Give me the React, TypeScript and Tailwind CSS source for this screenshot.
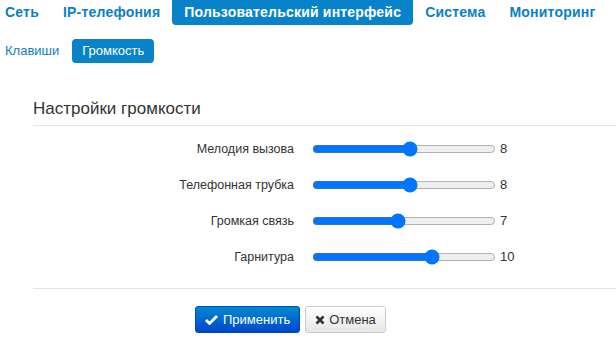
import React, { useState } from 'react';

const topTabs = ['Сеть', 'IP-телефония', 'Пользовательский интерфейс', 'Система', 'Мониторинг'];
const subTabs = ['Клавиши', 'Громкость'];

const volumes = [
  { label: 'Мелодия вызова', value: 8 },
  { label: 'Телефонная трубка', value: 8 },
  { label: 'Громкая связь', value: 7 },
  { label: 'Гарнитура', value: 10 },
];

export default function App() {
  const [levels, setLevels] = useState(volumes.map((v) => v.value));

  return (
    <div className="w-[616px] h-[358px] bg-white overflow-hidden font-['Liberation_Sans',Arial,sans-serif]">
      {/* Top navigation */}
      <div className="flex h-[25px] ml-[-7px]">
        {topTabs.map((t, i) => (
          <div
            key={t}
            className={
              i === 2
                ? 'px-3 h-[25px] flex items-center rounded-b-[4px] bg-[#0883c9] text-white font-bold text-[14px] tracking-[0.2px]'
                : 'px-3 h-[25px] flex items-center text-[#0a7fc6] font-bold text-[14px] tracking-[0.2px]'
            }
          >
            {t}
          </div>
        ))}
      </div>

      {/* Sub navigation */}
      <div className="flex items-center mt-[14px] h-[24px] ml-[5px] gap-[13px]">
        {subTabs.map((t, i) => (
          <div
            key={t}
            className={
              i === 1
                ? 'h-[24px] px-[10px] flex items-center rounded-[4px] bg-[#0883c9] text-white text-[13px]'
                : 'h-[24px] flex items-center text-[#0a7fc6] text-[13px]'
            }
          >
            {t}
          </div>
        ))}
      </div>

      {/* Panel */}
      <div className="ml-[33px] mt-[34px]">
        <h2 className="text-[17px] leading-[24px] text-[#333] pb-[4px] border-b border-[#e5e5e5]">
          Настройки громкости
        </h2>

        <div className="flex flex-col pt-[11px] gap-[12px]">
          {volumes.map((v, i) => (
            <div key={v.label} className="flex items-center h-[24px]">
              <label className="w-[261px] text-right text-[12.5px] text-[#333]">{v.label}</label>
              <input
                type="range"
                min={0}
                max={15}
                value={levels[i]}
                onChange={(e) => {
                  const next = [...levels];
                  next[i] = Number(e.target.value);
                  setLevels(next);
                }}
                className="ml-[18px] w-[184px] m-0"
              />
              <span className="ml-[4px] text-[13px] text-[#333]">{levels[i]}</span>
            </div>
          ))}
        </div>

        <div className="mt-[19px] border-t border-[#e5e5e5] pt-[17px] pl-[162px] flex gap-[5px]">
          <button className="h-[27px] px-[9px] flex items-center gap-[5px] rounded-[3px] border border-[#0044cc] bg-gradient-to-b from-[#0088cc] to-[#0044cc] text-white text-[13px]">
            <svg width="13" height="11" viewBox="0 0 13 11">
              <path d="M1 6 L4.5 9.5 L12 2" fill="none" stroke="white" strokeWidth="2.8" />
            </svg>
            Применить
          </button>
          <button className="h-[27px] px-[9px] flex items-center gap-[4px] rounded-[3px] border border-[#cccccc] bg-gradient-to-b from-white to-[#e6e6e6] text-[#333] text-[13px]">
            <svg width="10" height="10" viewBox="0 0 10 10">
              <path d="M1.5 1.5 L8.5 8.5 M8.5 1.5 L1.5 8.5" fill="none" stroke="#333" strokeWidth="2.6" />
            </svg>
            Отмена
          </button>
        </div>
      </div>
    </div>
  );
}
